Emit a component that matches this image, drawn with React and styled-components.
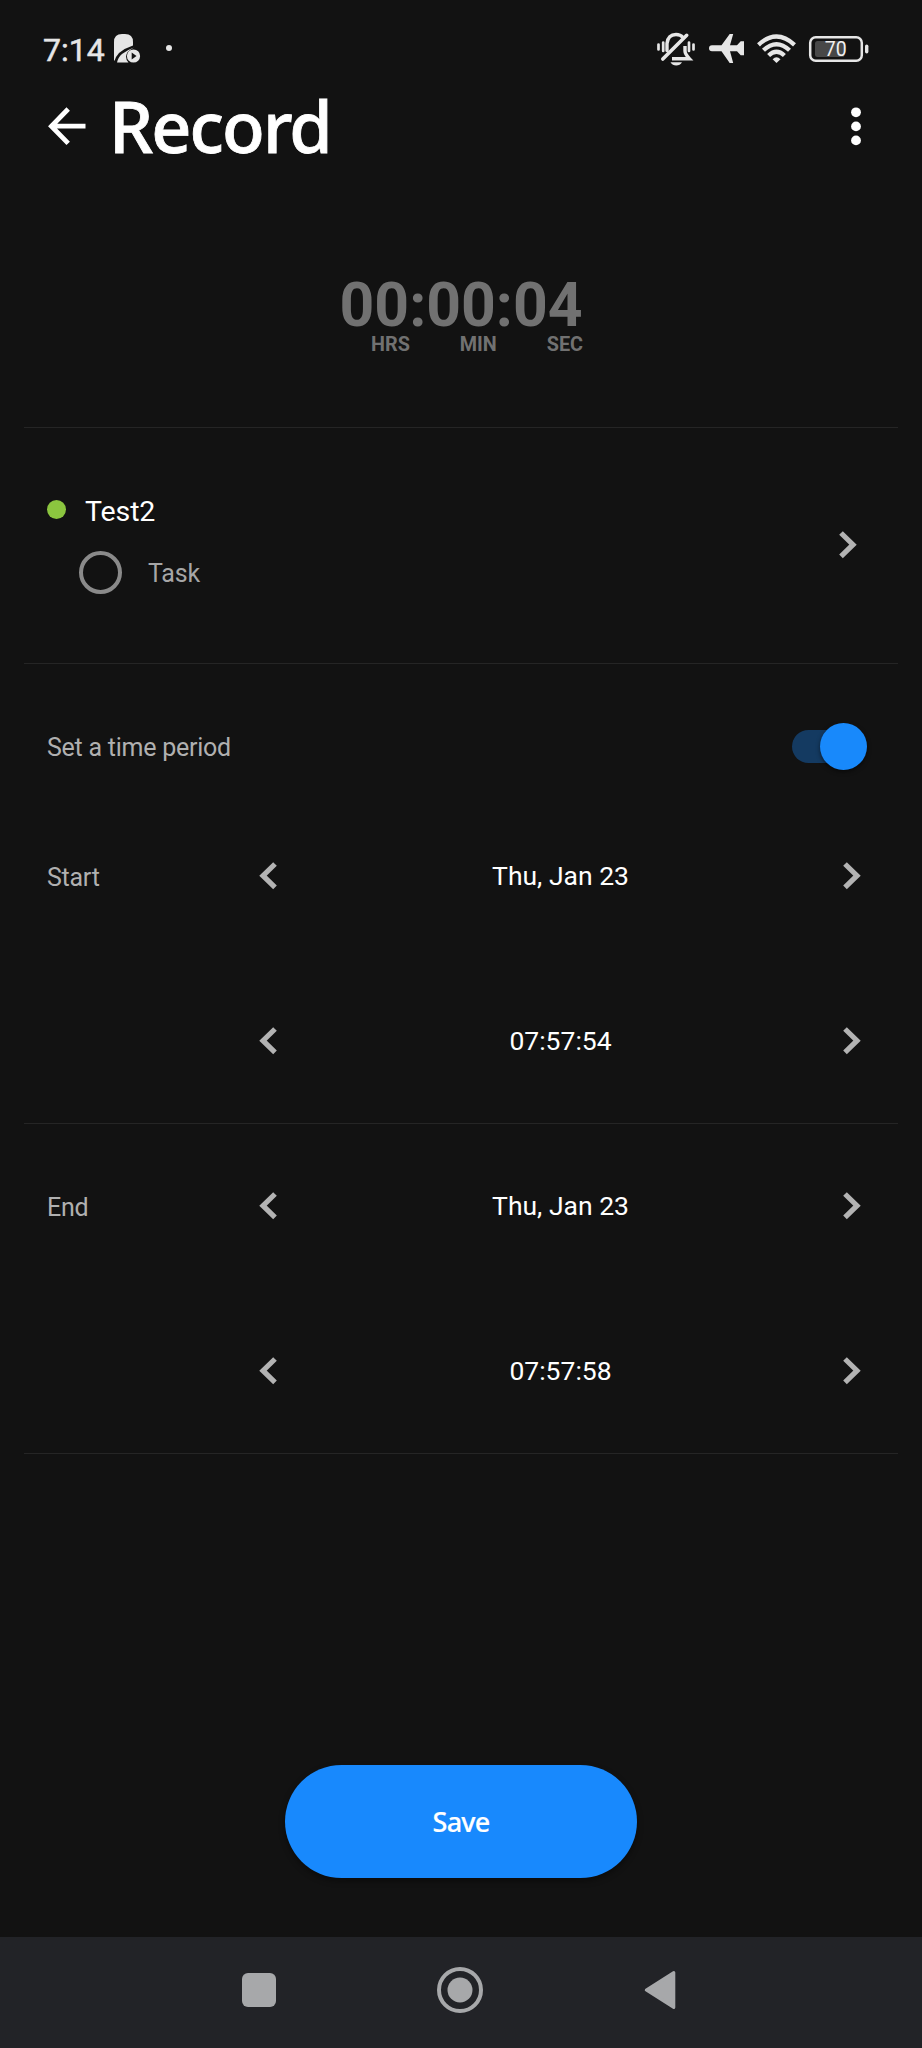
import React from "react";
import styled, { createGlobalStyle } from "styled-components";

const GlobalStyle = createGlobalStyle`
  * { box-sizing: border-box; }
  html, body { margin: 0; padding: 0; background: #121212; }
  button { border: 0; padding: 0; background: none; color: inherit; font: inherit; }
  svg { display: block; flex: none; }
`;

const Screen = styled.div`
  width: 922px;
  height: 2048px;
  display: flex;
  flex-direction: column;
  background: #121212;
  color: #fff;
  font-family: Roboto, "Liberation Sans", sans-serif;
  overflow: hidden;
`;

const StatusBar = styled.header`
  height: 80px;
  padding: 16px 53px 0 43px;
  display: flex;
  justify-content: space-between;
  color: #e6e6e6;
`;

const StatusGroup = styled.div`
  display: flex;
  align-items: center;
  height: 64px;
`;

const Clock = styled.span`
  font-size: 32px;
  font-weight: 400;
  line-height: 64px;
  width: 70px;
  padding-top: 4px;
  -webkit-text-stroke: 0.5px currentColor;
`;

const AppBar = styled.div`
  height: 110px;
  padding: 0 54px 0 48px;
  display: flex;
  align-items: flex-start;
`;

const IconButton = styled.button`
  display: flex;
  margin-top: ${(p) => p.$top}px;
`;

const Title = styled.h1`
  margin: -2px auto 0 23px;
  font-family: "Noto Sans", sans-serif;
  font-size: 70px;
  font-weight: 500;
  line-height: 96px;
  letter-spacing: -1.9px;
  -webkit-text-stroke: 0.8px currentColor;
`;

const Timer = styled.section`
  height: 237px;
  padding-top: 89px;
  margin: 0 24px;
  display: flex;
  flex-direction: column;
  align-items: center;
  color: #717171;
  font-weight: 700;
`;

const Digits = styled.div`
  font-size: 60.7px;
  line-height: 54px;
  width: 243px;
  white-space: nowrap;
`;

const Units = styled.div`
  width: 244px;
  margin-top: 2px;
  padding: 0 0 0 32px;
  display: flex;
  justify-content: space-between;
  font-size: 19.8px;
  line-height: 20px;
`;

const Divider = styled.hr`
  flex: none;
  width: 874px;
  height: 1px;
  margin: 0 24px;
  border: 0;
  background: #252525;
`;

const ProjectRow = styled.section`
  height: 235px;
  padding: 64px 65px 0 47px;
  display: flex;
  justify-content: space-between;
`;

const ProjectLine = styled.div`
  display: flex;
  align-items: center;
  height: 36px;
  gap: 19px;
  font-size: 28.5px;
  line-height: 36px;
`;

const ProjectDot = styled.span`
  width: 19px;
  height: 19px;
  margin-bottom: 2px;
  border-radius: 50%;
  background: #8bc53f;
`;

const ProjectName = styled.span`
  padding-top: 3px;
  letter-spacing: -0.1px;
`;

const TaskLine = styled.div`
  display: flex;
  align-items: center;
  gap: 26px;
  height: 44px;
  margin: 22px 0 0 32px;
  color: #a6a6a6;
  font-size: 25px;
  line-height: 44px;
`;

const TaskName = styled.span`
  padding-top: 4px;
  letter-spacing: -0.2px;
`;

const TaskRing = styled.span`
  width: 43px;
  height: 43px;
  border: 4px solid #8a8a8a;
  border-radius: 50%;
`;

const PeriodRow = styled.section`
  height: 130px;
  padding: 34px 54px 0 47px;
  display: flex;
  align-items: center;
  justify-content: space-between;
`;

const Label = styled.span`
  padding-top: 4px;
  color: #b0b0b0;
  font-size: 25px;
  line-height: 32px;
  letter-spacing: -0.25px;
`;

const Switch = styled.button`
  width: 76px;
  height: 48px;
  display: flex;
  align-items: center;
`;

const Track = styled.span`
  width: 66px;
  height: 33px;
  border-radius: 17px;
  background: #143a61;
  display: flex;
  align-items: center;
`;

const Thumb = styled.span`
  flex: none;
  width: 47px;
  height: 47px;
  margin-left: 28px;
  border-radius: 50%;
  background: #1889fb;
  box-shadow: 0 2px 4px rgba(0, 0, 0, 0.5);
`;

const TimeBlock = styled.section`
  height: ${(p) => p.$height}px;
  padding-top: ${(p) => p.$top}px;
`;

const TimeRow = styled.div`
  height: 40px;
  margin-bottom: ${(p) => (p.$last ? 0 : 125)}px;
  padding: 0 61px 0 47px;
  display: grid;
  grid-template-columns: 212px 18px 1fr 18px;
  align-items: center;
`;

const Value = styled.span`
  text-align: center;
  padding-left: 1px;
  font-size: 26.5px;
  line-height: 32px;
`;

const Footer = styled.footer`
  flex: 1;
  display: flex;
  justify-content: center;
  align-items: flex-end;
  padding-bottom: 59px;
`;

const SaveButton = styled.button`
  width: 352px;
  height: 113px;
  border-radius: 57px;
  background: #1889fd;
  box-shadow: 0 3px 6px rgba(0, 0, 0, 0.4);
  color: #fff;
  font-family: "Noto Sans", sans-serif;
  font-size: 27px;
  font-weight: 500;
  letter-spacing: -0.8px;
  text-align: center;
  -webkit-text-stroke: 0.2px currentColor;
`;

const NavBar = styled.nav`
  height: 111px;
  flex: none;
  background: #222327;
  display: flex;
  align-items: center;
  justify-content: space-between;
  padding: 0 246px 5px 242px;
`;

const Chevron = ({ left }) => (
  <svg width="18" height="28" viewBox="0 0 18 28" fill="none" stroke="#b3b3b3" strokeWidth="5.2">
    <path d={left ? "M16 2 L4 13.700 L16 25.400" : "M2 2 L14 13.700 L2 25.400"} />
  </svg>
);

const ContactPlay = () => (
  <svg width="28" height="30" viewBox="0 0 28 30" fill="#e6e6e6">
    <path d="M1 27 V9 Q1 1 9 1 H12 Q20 1 20 9 V12.500 Q12 15 6 20 Q3 23 1.500 28 Z" />
    <path d="M4 29.500 Q5 24.500 9 21 Q14 17 21 14.500 Q13.500 18 13 23.500 Q13 27 15.500 29.500 Z" />
    <circle cx="20.500" cy="23" r="6.600" />
    <path d="M18.700 19.400 L23.500 23 L18.700 26.600 Z" fill="#121212" />
  </svg>
);

const NotificationDot = styled.span`
  width: 6px;
  height: 6px;
  margin-left: 25px;
  border-radius: 50%;
  background: #e6e6e6;
`;

const StatusIcons = () => (
  <svg width="214" height="40" viewBox="655 28 214 40" fill="none" stroke="#e6e6e6">
    <g strokeWidth="2.700" strokeLinecap="round">
      <path d="M658.500 44.500 V49.500 M663.200 42.500 V51 M689 42.500 V51 M693.500 44.500 V49.500" />
      <path d="M667 50.500 V43.500 Q668 34.500 676 34.500 Q680.500 34.500 683 37.500" strokeWidth="3.400" />
      <path d="M685 46 V51 Q685 54 689.500 58.800 H672" strokeWidth="3.400" strokeLinecap="butt" />
      <path d="M662.800 59 L686.700 35.300" strokeWidth="3.600" />
    </g>
    <path d="M670.500 62.200 H682 Q680 65.500 676.200 65.500 Q672.500 65.500 670.500 62.200Z" fill="#e6e6e6" stroke="none" />
    <path
      fill="#e6e6e6"
      stroke="none"
      d="M712 45.200 H721.500 L729.700 34 H733.200 L730 45.200 H737 L740.700 41.200 H744 V55.300 H740.700 L737 51.200 H730 L733.200 63 H729.700 L721.500 51.200 H712 Q709 51 709 48.200 Q709 45.400 712 45.200Z"
    />
    <g strokeWidth="4.300">
      <path d="M758.500 44.800 Q776.500 28.200 794.500 44.800" />
      <path d="M763.500 50.300 Q776.500 38 789.500 50.300" />
      <path d="M768.600 55.500 Q776.500 48 784.400 55.500" />
    </g>
    <path d="M772.600 59.300 Q776.500 55 780.500 59.300 L776.500 63Z" fill="#e6e6e6" stroke="none" />
    <rect x="810.200" y="37.200" width="51.600" height="23.600" rx="5.500" strokeWidth="2.500" />
    <rect x="815" y="41" width="29.500" height="16" rx="2.500" fill="#484848" stroke="none" />
    <rect x="865" y="44.500" width="3.400" height="9" rx="1.700" fill="#e6e6e6" stroke="none" />
    <text x="835.700" y="56" fill="#f0f0f0" stroke="none" fontFamily="Roboto, sans-serif" fontSize="19.500" fontWeight="400" textAnchor="middle">70</text>
  </svg>
);

const Stepper = ({ label, value, last }) => (
  <TimeRow $last={last}>
    <Label>{label}</Label>
    <Chevron left />
    <Value>{value}</Value>
    <Chevron />
  </TimeRow>
);

export default function App() {
  return (
    <>
      <GlobalStyle />
      <Screen>
        <StatusBar>
          <StatusGroup>
            <Clock>7:14</Clock>
            <ContactPlay />
            <NotificationDot />
          </StatusGroup>
          <StatusGroup>
            <StatusIcons />
          </StatusGroup>
        </StatusBar>

        <AppBar>
          <IconButton $top={27} aria-label="Back">
            <svg width="38" height="40" viewBox="0 0 38 40" fill="none" stroke="#fff" strokeWidth="4.800">
              <path d="M20.200 2 L3.400 19.200 L20.200 36.400 M3 19.200 H37.500" />
            </svg>
          </IconButton>
          <Title>Record</Title>
          <IconButton $top={26} aria-label="More">
            <svg width="24" height="40" viewBox="0 0 24 40" fill="#fff">
              <circle cx="12" cy="6.300" r="4.900" />
              <circle cx="12" cy="20.400" r="4.900" />
              <circle cx="12" cy="34.400" r="4.900" />
            </svg>
          </IconButton>
        </AppBar>

        <Timer>
          <Digits>00:00:04</Digits>
          <Units>
            <span>HRS</span>
            <span>MIN</span>
            <span>SEC</span>
          </Units>
        </Timer>
        <Divider />

        <ProjectRow>
          <div>
            <ProjectLine>
              <ProjectDot />
              <ProjectName>Test2</ProjectName>
            </ProjectLine>
            <TaskLine>
              <TaskRing />
              <TaskName>Task</TaskName>
            </TaskLine>
          </div>
          <IconButton $top={39} aria-label="Choose project">
            <Chevron />
          </IconButton>
        </ProjectRow>
        <Divider />

        <PeriodRow>
          <Label>Set a time period</Label>
          <Switch role="switch" aria-checked="true">
            <Track>
              <Thumb />
            </Track>
          </Switch>
        </PeriodRow>
        <TimeBlock $height={329} $top={62}>
          <Stepper label="Start" value="Thu, Jan 23" />
          <Stepper value="07:57:54" last />
        </TimeBlock>
        <Divider />
        <TimeBlock $height={329} $top={62}>
          <Stepper label="End" value="Thu, Jan 23" />
          <Stepper value="07:57:58" last />
        </TimeBlock>
        <Divider />

        <Footer>
          <SaveButton>Save</SaveButton>
        </Footer>

        <NavBar>
          <svg width="34" height="34" viewBox="0 0 34 34">
            <rect width="34" height="34" rx="6" fill="#a7a8aa" />
          </svg>
          <svg width="46" height="46" viewBox="0 0 46 46" fill="#a7a8aa">
            <circle cx="23" cy="23" r="21" fill="none" stroke="#a7a8aa" strokeWidth="4" />
            <circle cx="23" cy="23" r="12.500" />
          </svg>
          <svg width="32" height="40" viewBox="0 0 32 40" fill="#a7a8aa" stroke="#a7a8aa" strokeWidth="3" strokeLinejoin="round">
            <path d="M29.800 2.500 V37.500 L2.300 20 Z" />
          </svg>
        </NavBar>
      </Screen>
    </>
  );
}
